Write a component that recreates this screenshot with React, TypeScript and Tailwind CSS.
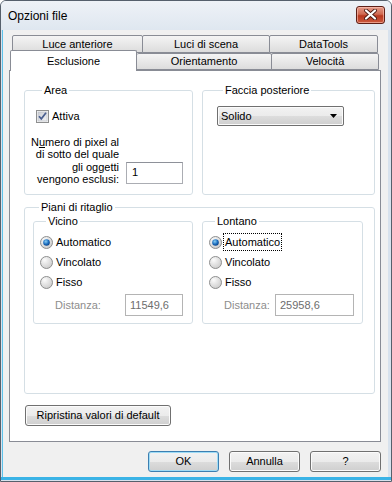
import React from "react";

const font = "font-['Liberation_Sans',Arial,sans-serif]";

const btnGray =
  "bg-[linear-gradient(#f2f2f2,#ebebeb_50%,#dddddd_50%,#cfcfcf)] border border-[#707070] rounded-[3px] shadow-[inset_0_0_0_1px_#fbfbfb]";

const Check = () => (
  <svg width="13" height="13" viewBox="0 0 13 13" className="shrink-0">
    <defs>
      <linearGradient id="cbg" x1="0" y1="0" x2="1" y2="1">
        <stop offset="0" stopColor="#c9ccd3" />
        <stop offset="1" stopColor="#f4f5f7" />
      </linearGradient>
    </defs>
    <rect x="0.5" y="0.5" width="12" height="12" fill="#f6f6f6" stroke="#8e8f8f" />
    <rect x="2" y="2" width="9" height="9" fill="url(#cbg)" stroke="#b9bdc4" strokeWidth="0.6" />
    <path d="M3 6.2 L5.3 8.8 L10 2.8" fill="none" stroke="#4a5f8f" strokeWidth="1.7" />
  </svg>
);

const Radio = ({ on }: { on?: boolean }) => (
  <svg width="13" height="13" viewBox="0 0 13 13" className="shrink-0">
    <defs>
      <radialGradient id="rgOff" cx="0.35" cy="0.3" r="0.8">
        <stop offset="0" stopColor="#fbfbfb" />
        <stop offset="1" stopColor="#c8c8c8" />
      </radialGradient>
      <radialGradient id="rgOn" cx="0.4" cy="0.35" r="0.7">
        <stop offset="0" stopColor="#8ad0f5" />
        <stop offset="0.6" stopColor="#1a6bbd" />
        <stop offset="1" stopColor="#0d3f7d" />
      </radialGradient>
    </defs>
    <circle cx="6.5" cy="6.5" r="6" fill="url(#rgOff)" stroke="#8e8f8f" />
    {on && <circle cx="6.5" cy="6.5" r="3.3" fill="url(#rgOn)" />}
  </svg>
);

const Tab = ({ label, w, sel, cls = "" }: { label: string; w: number; sel?: boolean; cls?: string }) => (
  <div
    style={{ width: w }}
    className={
      sel
        ? "relative z-10 h-[21px] -mb-px -mt-[3px] bg-white border border-b-0 border-[#898c95] rounded-t-[2px] flex justify-center pt-[2px] text-[11px] text-black " + cls
        : "h-full -ml-px first:ml-0 bg-[linear-gradient(#f4f4f4,#e6e6e6_60%,#dcdcdc)] border border-[#898c95] rounded-t-[2px] flex items-center justify-center text-[11px] text-black " + cls
    }
  >
    {label}
  </div>
);

const Legend = ({ children }: { children: React.ReactNode }) => (
  <legend className="ml-[6px] px-[2px] text-[11px] leading-[13px] text-black">{children}</legend>
);

const Distance = ({ value, w, gap }: { value: string; w: number; gap: number }) => (
  <div className="flex items-center mt-[2px]">
    <span className="text-[11px] text-[#8d8d8d]" style={{ width: gap }}>
      Distanza:
    </span>
    <div
      style={{ width: w }}
      className="h-[22px] border border-[#b4b4b4] bg-white flex items-center pl-[4px] text-[11px] text-[#6d6d6d]"
    >
      {value}
    </div>
  </div>
);

const RadioGroup = ({ title, w, focus, distance, dw, gap }: { title: string; w: number; focus?: boolean; distance: string; dw: number; gap: number }) => (
  <fieldset style={{ width: w }} className="h-[109px] border border-[#d5dfe5] rounded-[3px] pl-[6px]">
    <Legend>{title}</Legend>
    <div className="mt-[4px]">
      {["Automatico", "Vincolato", "Fisso"].map((l, i) => (
        <div key={l} className="h-[20px] flex items-center gap-[3px] text-[11px] text-black">
          <Radio on={i === 0} />
          <span className={i === 0 && focus ? "outline outline-1 outline-dotted outline-black px-px -ml-px" : ""}>{l}</span>
        </div>
      ))}
      <div className="pl-[15px]">
        <Distance value={distance} w={dw} gap={gap} />
      </div>
    </div>
  </fieldset>
);

export default function App() {
  return (
    <div className={`${font} w-[392px] h-[482px] flex flex-col bg-[#d8e2ed] border border-[#56606c] rounded-t-[6px] overflow-hidden`}>
      <div className="h-[29px] shrink-0 flex items-center justify-between pl-[7px] pr-[6px] bg-[linear-gradient(#eef2f7,#dfe7f0)]">
        <span className="text-[12px] text-black">Opzioni file</span>
        <div className="w-[29px] h-[18px] -mt-[2px] rounded-[3px] border border-[#5e1f16] bg-[linear-gradient(#e49a88,#d06a52_45%,#b8381f_55%,#cc5a3f)] flex items-center justify-center shadow-[inset_0_0_0_1px_rgba(255,200,185,0.6)]">
          <svg width="13" height="11" viewBox="0 0 13 11">
            <path d="M2 1.5 L11 9.5 M11 1.5 L2 9.5" stroke="#4a1a12" strokeWidth="3.8" strokeLinecap="round" />
            <path d="M2 1.5 L11 9.5 M11 1.5 L2 9.5" stroke="#ffffff" strokeWidth="2.2" strokeLinecap="round" />
          </svg>
        </div>
      </div>

      <div className="ml-[2px] mr-[3px] h-[447px] shrink-0 bg-[#f0f0f0] pl-[6px] pt-[5px] shadow-[-1px_0_0_#5ec2ea]">
        {/* tabs */}
        <div className="h-[18px] flex ml-[3px]">
          <Tab label="Luce anteriore" w={131} />
          <Tab label="Luci di scena" w={128} />
          <Tab label="DataTools" w={109} />
        </div>
        <div className="h-[17px] flex items-end ml-[1px]">
          <Tab label="Esclusione" w={127} sel />
          <div className="h-[17px] flex">
            <Tab label="Orientamento" w={135} cls="border-l-0" />
            <Tab label="Velocità" w={108} />
          </div>
        </div>

        {/* panel */}
        <div className="w-[372px] h-[372px] bg-white border border-[#898c95] pl-[14px] pt-[13px]">
          <div className="flex gap-[9px]">
            <fieldset className="w-[169px] h-[111px] border border-[#d5dfe5] rounded-[3px] pl-[11px]">
              <Legend>Area</Legend>
              <div className="mt-[11px] flex items-center gap-[3px] text-[11px] text-black">
                <Check />
                <span>Attiva</span>
              </div>
              <div className="mt-[11px] -ml-[10px] flex items-end gap-[7px]">
                <div className="w-[93px] shrink-0 whitespace-nowrap text-right text-[11px] leading-[12.5px] text-black">
                  N<span className="underline">u</span>mero di pixel al
                  <br />
                  di sotto del quale
                  <br />
                  gli oggetti
                  <br />
                  vengono esclusi:
                </div>
                <div className="w-[57px] h-[22px] mb-[2px] border border-[#abadb3] border-t-[#8e9199] bg-white flex items-center pl-[5px] text-[11px] text-black">
                  1
                </div>
              </div>
            </fieldset>

            <fieldset className="w-[173px] h-[111px] border border-[#d5dfe5] rounded-[3px] pl-[14px]">
              <Legend>Faccia posteriore</Legend>
              <div className="mt-[9px] w-[127px] h-[20px] border border-[#707070] rounded-[2px] bg-[linear-gradient(#f2f2f2,#ebebeb_50%,#dddddd_50%,#cfcfcf)] shadow-[inset_0_0_0_1px_#fbfbfb] flex items-center justify-between pl-[3px] pr-[6px] text-[11px] text-black">
                <span>Solido</span>
                <svg width="7" height="4" viewBox="0 0 7 4">
                  <path d="M0 0 H7 L3.5 4 Z" fill="#000" />
                </svg>
              </div>
            </fieldset>
          </div>

          <fieldset className="mt-[6px] w-[351px] h-[193px] border border-[#d5dfe5] rounded-[3px] pl-[8px]">
            <Legend>Piani di ritaglio</Legend>
            <div className="mt-[1px] flex gap-[9px]">
              <RadioGroup title="Vicino" w={160} distance="11549,6" dw={58} gap={70} />
              <RadioGroup title="Lontano" w={161} focus distance="25958,6" dw={79} gap={51} />
            </div>
          </fieldset>

          <button className={`${btnGray} mt-[11px] ml-[1px] w-[146px] h-[21px] text-[11px] text-black`}>
            Ripristina valori di default
          </button>
        </div>

        {/* dialog buttons */}
        <div className="w-[372px] mt-[9px] flex justify-end gap-[10px]">
          <button className="w-[71px] h-[21px] rounded-[3px] border border-[#3c7fb1] bg-[linear-gradient(#f2f2f2,#ebebeb_50%,#dddddd_50%,#cfcfcf)] shadow-[inset_0_0_0_1px_#9fdcf6] text-[11px] text-black">
            OK
          </button>
          <button className={`${btnGray} w-[71px] h-[21px] text-[11px] text-black`}>Annulla</button>
          <button className={`${btnGray} w-[71px] h-[21px] text-[11px] text-black`}>?</button>
        </div>
      </div>
      <div className="flex-1 border-t-[3px] border-[#3ab3e6]" />
    </div>
  );
}
